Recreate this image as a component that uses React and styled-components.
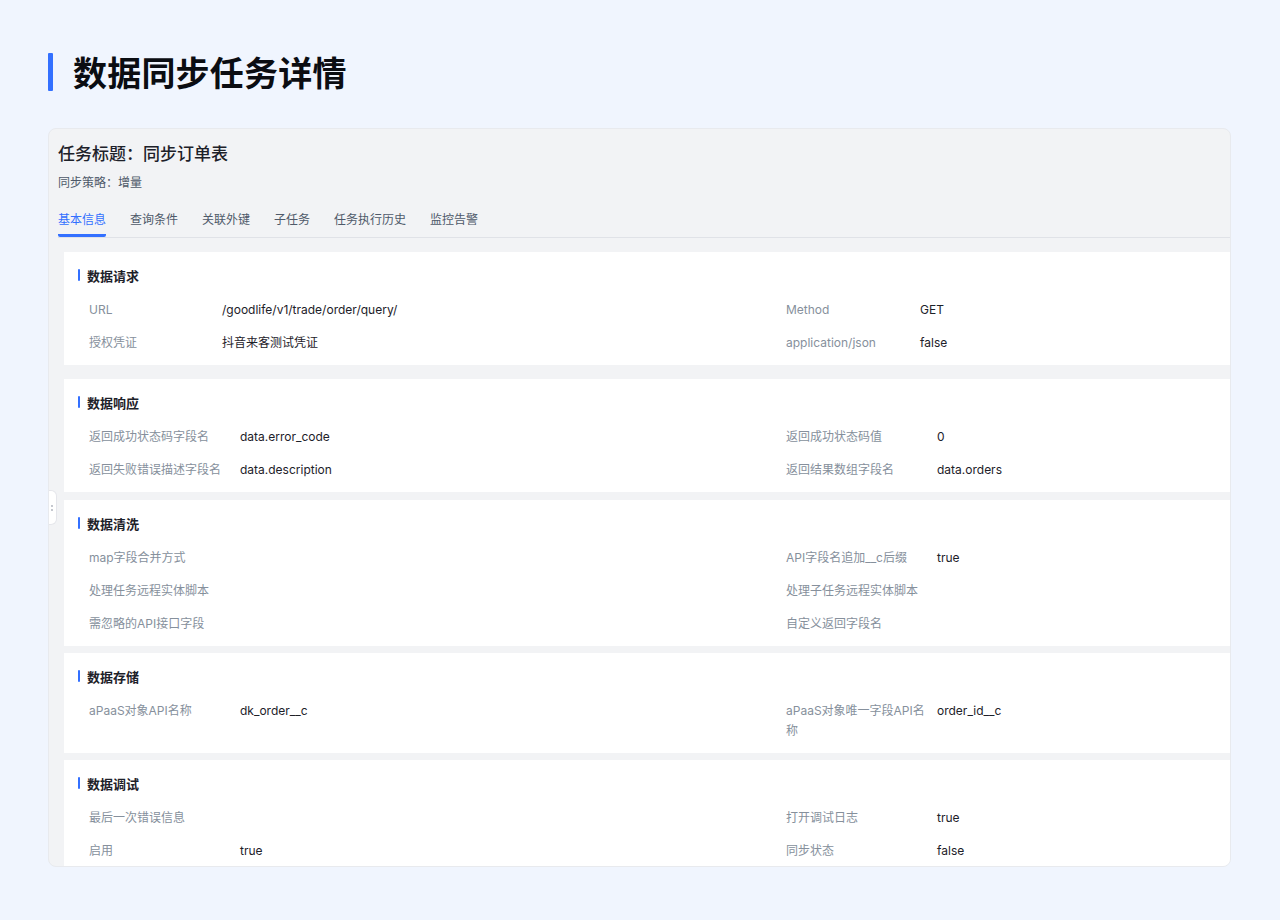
import React from "react";
import styled, { createGlobalStyle } from "styled-components";

const GlobalStyle = createGlobalStyle`
  html, body { margin: 0; padding: 0; }
  body {
    background: #f0f5fe;
    font-family: "Inter", "Noto Sans CJK SC", "Noto Sans", sans-serif;
    color: #1d2129;
  }
`;

const Page = styled.div`
  width: 1280px;
  height: 920px;
  box-sizing: border-box;
  padding: 53px 49px 0 48px;
  display: flex;
  flex-direction: column;
`;

const PageHeader = styled.div`
  display: flex;
  align-items: center;
  height: 38px;
  gap: 20px;
`;

const TitleBar = styled.span`
  width: 5px;
  height: 38px;
  background: #3370ff;
  border-radius: 1px;
`;

const PageTitle = styled.h1`
  margin: 0;
  font-family: "Noto Sans CJK SC", sans-serif;
  font-size: 34px;
  font-weight: 700;
  letter-spacing: 0.2px;
  color: #0b0d12;
  line-height: 38px;
`;

const Card = styled.div`
  position: relative;
  margin-top: 37px;
  height: 739px;
  box-sizing: border-box;
  background: #f2f3f5;
  border: 1px solid #e8eaee;
  border-radius: 8px;
  overflow: hidden;
  display: flex;
  flex-direction: column;
`;

const CardHead = styled.div`
  padding: 12px 0 0 9px;
`;

const TaskTitle = styled.div`
  font-family: "Noto Sans CJK SC", sans-serif;
  font-size: 17px;
  font-weight: 500;
  line-height: 24px;
  color: #1d2129;
`;

const Strategy = styled.div`
  margin-top: 8px;
  font-size: 12px;
  line-height: 20px;
  color: #4e5969;
`;

const TabBar = styled.div`
  display: flex;
  gap: 24px;
  border-bottom: 1px solid #e0e2e7;
`;

const Tab = styled.div`
  padding-top: 17px;
  padding-bottom: 4px;
  font-size: 12px;
  line-height: 20px;
  color: ${(p) => (p.$active ? "#3370ff" : "#4e5969")};
  border-bottom: 3px solid ${(p) => (p.$active ? "#3370ff" : "transparent")};
  border-radius: 2px;
`;

const Content = styled.div`
  padding: 14px 0 0 15px;
  display: flex;
  flex-direction: column;
`;

const Section = styled.section`
  margin-top: ${(p) => p.$gap}px;
  background: #ffffff;
  padding: 13px 0 6px 14px;
`;

const SectionHead = styled.div`
  display: flex;
  align-items: center;
  gap: 7px;
  height: 20px;
  margin-bottom: 8px;
  font-family: "Noto Sans CJK SC", sans-serif;
  font-size: 13px;
  font-weight: 700;
  color: #1d2129;
`;

const HeadBar = styled.span`
  width: 2px;
  height: 12px;
  background: #3370ff;
  border-radius: 1px;
`;

const Grid = styled.div`
  margin-left: 11px;
  display: grid;
  grid-template-columns: ${(p) => `${p.$lw}px ${697 - p.$lw}px ${p.$rlw}px 1fr`};
`;

const Label = styled.div`
  padding: 7px 8px 6px 0;
  font-size: 12px;
  line-height: 20px;
  color: #86909c;
  word-break: break-all;
`;

const Value = styled.div`
  padding: 7px 12px 6px 0;
  font-size: 12px;
  line-height: 20px;
  color: #1d2129;
`;

const Handle = styled.div`
  position: absolute;
  left: -1px;
  top: 361px;
  width: 8px;
  height: 33px;
  background: #ffffff;
  border: 1px solid #e5e6eb;
  border-left: none;
  border-radius: 0 6px 6px 0;
  display: flex;
  align-items: center;
  justify-content: center;
`;

const sections = [
  {
    title: "数据请求",
    lw: 133,
    rlw: 134,
    gap: 0,
    rows: [
      ["URL", "/goodlife/v1/trade/order/query/", "Method", "GET"],
      ["授权凭证", "抖音来客测试凭证", "application/json", "false"],
    ],
  },
  {
    title: "数据响应",
    lw: 151,
    rlw: 151,
    gap: 14,
    rows: [
      ["返回成功状态码字段名", "data.error_code", "返回成功状态码值", "0"],
      ["返回失败错误描述字段名", "data.description", "返回结果数组字段名", "data.orders"],
    ],
  },
  {
    title: "数据清洗",
    lw: 151,
    rlw: 151,
    gap: 8,
    rows: [
      ["map字段合并方式", "", "API字段名追加__c后缀", "true"],
      ["处理任务远程实体脚本", "", "处理子任务远程实体脚本", ""],
      ["需忽略的API接口字段", "", "自定义返回字段名", ""],
    ],
  },
  {
    title: "数据存储",
    lw: 151,
    rlw: 151,
    gap: 7,
    rows: [["aPaaS对象API名称", "dk_order__c", "aPaaS对象唯一字段API名称", "order_id__c"]],
  },
  {
    title: "数据调试",
    lw: 151,
    rlw: 151,
    gap: 7,
    rows: [
      ["最后一次错误信息", "", "打开调试日志", "true"],
      ["启用", "true", "同步状态", "false"],
    ],
  },
];

const tabs = ["基本信息", "查询条件", "关联外键", "子任务", "任务执行历史", "监控告警"];

export default function App() {
  return (
    <>
      <GlobalStyle />
      <Page>
        <PageHeader>
          <TitleBar />
          <PageTitle>数据同步任务详情</PageTitle>
        </PageHeader>
        <Card>
          <CardHead>
            <TaskTitle>任务标题：同步订单表</TaskTitle>
            <Strategy>同步策略：增量</Strategy>
            <TabBar>
              {tabs.map((t, i) => (
                <Tab key={t} $active={i === 0}>
                  {t}
                </Tab>
              ))}
            </TabBar>
          </CardHead>
          <Content>
            {sections.map((s) => (
              <Section key={s.title} $gap={s.gap}>
                <SectionHead>
                  <HeadBar />
                  {s.title}
                </SectionHead>
                <Grid $lw={s.lw} $rlw={s.rlw}>
                  {s.rows.map((r, ri) => (
                    <React.Fragment key={ri}>
                      <Label>{r[0]}</Label>
                      <Value>{r[1]}</Value>
                      <Label>{r[2]}</Label>
                      <Value>{r[3]}</Value>
                    </React.Fragment>
                  ))}
                </Grid>
              </Section>
            ))}
          </Content>
          <Handle>
            <svg width="4" height="10" viewBox="0 0 4 10">
              <circle cx="2" cy="3" r="0.9" fill="#a9aeb8" />
              <circle cx="2" cy="7" r="0.9" fill="#a9aeb8" />
            </svg>
          </Handle>
        </Card>
      </Page>
    </>
  );
}
